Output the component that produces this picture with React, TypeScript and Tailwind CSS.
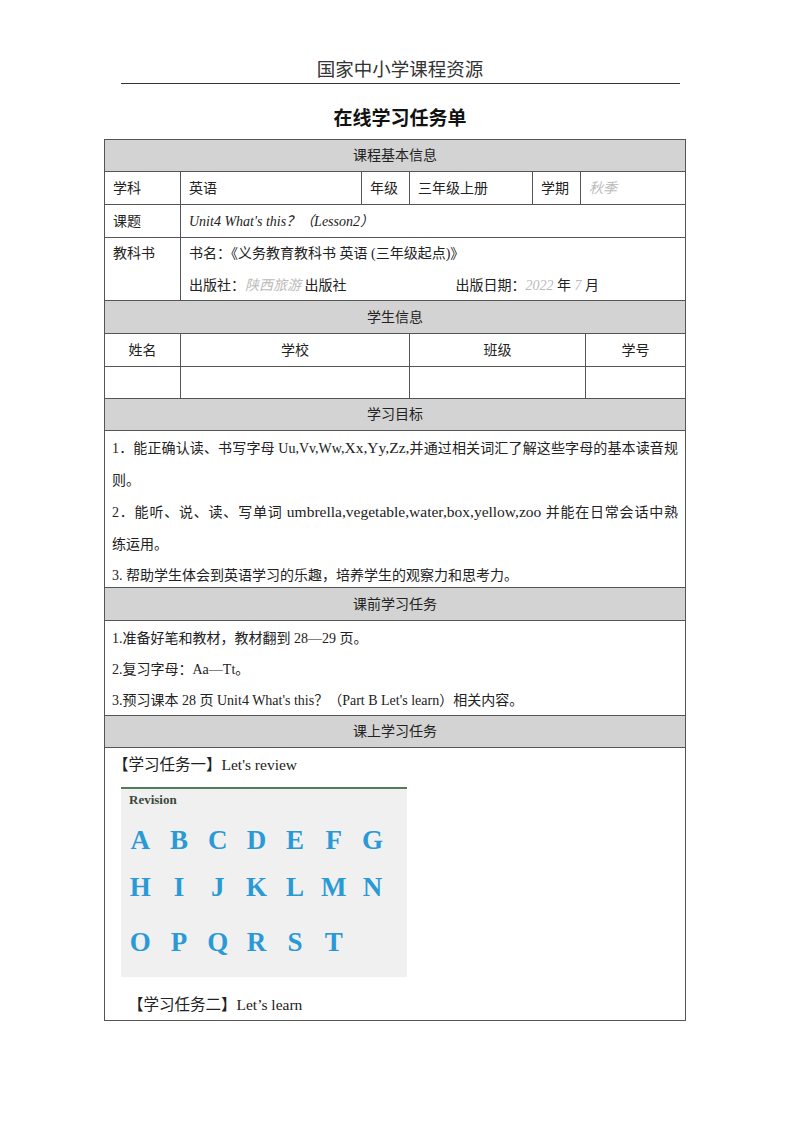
const Sec = ({ title, h = 'h-[32px]' }: { title: string; h?: string }) => (
  <div className={`${h} flex items-center justify-center bg-[#d3d3d3] border-b border-[#555] text-[14px] text-[#222]`}>
    {title}
  </div>
);

const Cell = ({ w, children, last }: { w: string; children?: React.ReactNode; last?: boolean }) => (
  <div className={`${w} flex items-center px-2 ${last ? '' : 'border-r border-[#555]'}`}>{children}</div>
);

const letters = [
  ['A', 'B', 'C', 'D', 'E', 'F', 'G'],
  ['H', 'I', 'J', 'K', 'L', 'M', 'N'],
  ['O', 'P', 'Q', 'R', 'S', 'T'],
];

export default function App() {
  return (
    <div className="w-[800px] h-[1132px] bg-white font-['Liberation_Serif','Noto_Sans_CJK_SC',serif] text-[#222]">
      {/* page header */}
      <div className="pt-[57px] flex justify-center text-[18.5px] leading-[26px] text-[#333]">国家中小学课程资源</div>
      <div className="ml-[121px] w-[559px] border-t border-[#333]"></div>
      <div className="mt-[22px] flex justify-center text-[19px] leading-[26px] font-bold text-[#111]">在线学习任务单</div>

      <div className="mt-[7px] ml-[104px] w-[582px] border-l border-t border-r border-[#555] text-[14px]">
        <Sec title="课程基本信息" />

        <div className="h-[33px] flex border-b border-[#555]">
          <Cell w="w-[76px]">学科</Cell>
          <Cell w="w-[181px]">英语</Cell>
          <Cell w="w-[48px]">年级</Cell>
          <Cell w="w-[123px]">三年级上册</Cell>
          <Cell w="w-[48px]">学期</Cell>
          <Cell w="flex-1" last><span className="italic text-[#bbb]">秋季</span></Cell>
        </div>

        <div className="h-[33px] flex border-b border-[#555]">
          <Cell w="w-[76px]">课题</Cell>
          <Cell w="flex-1" last><span className="italic">Unit4 What's this？（Lesson2）</span></Cell>
        </div>

        <div className="h-[63px] flex border-b border-[#555]">
          <div className="w-[76px] border-r border-[#555] px-2 pt-[5px] leading-[22px]">教科书</div>
          <div className="flex-1 px-2 pt-[4px]">
            <div className="leading-[24px]">书名：《义务教育教科书 英语 (三年级起点)》</div>
            <div className="mt-[8px] leading-[24px] flex">
              <span>出版社：<span className="italic text-[#bbb]">陕西旅游</span> 出版社</span>
              <span className="ml-[109px]">出版日期：<span className="italic text-[#bbb]">2022</span> 年 <span className="italic text-[#bbb]">7</span> 月</span>
            </div>
          </div>
        </div>

        <Sec title="学生信息" h="h-[33px]" />
        <div className="h-[33px] flex border-b border-[#555]">
          <div className="w-[76px] border-r border-[#555] flex items-center justify-center">姓名</div>
          <div className="w-[229px] border-r border-[#555] flex items-center justify-center">学校</div>
          <div className="w-[176px] border-r border-[#555] flex items-center justify-center">班级</div>
          <div className="flex-1 flex items-center justify-center">学号</div>
        </div>
        <div className="h-[32px] flex border-b border-[#555]">
          <div className="w-[76px] border-r border-[#555]"></div>
          <div className="w-[229px] border-r border-[#555]"></div>
          <div className="w-[176px] border-r border-[#555]"></div>
          <div className="flex-1"></div>
        </div>

        <Sec title="学习目标" />
        <div className="h-[157px] border-b border-[#555] px-[7px] pt-[1px] leading-[31.5px]">
          <div className="whitespace-nowrap text-justify [text-align-last:justify]">
            1．能正确认读、书写字母 Uu,Vv,Ww,<span className="text-[15.5px]">Xx,Yy,Zz,</span>并通过相关词汇了解这些字母的基本读音规
          </div>
          <div>则。</div>
          <div className="whitespace-nowrap text-justify [text-align-last:justify]">
            2．能听、说、读、写单词 <span className="text-[15.5px]">umbrella,vegetable,water,box,yellow,zoo</span> 并能在日常会话中熟
          </div>
          <div>练运用。</div>
          <div>3. 帮助学生体会到英语学习的乐趣，培养学生的观察力和思考力。</div>
        </div>

        <Sec title="课前学习任务" h="h-[33px]" />
        <div className="h-[95px] border-b border-[#555] px-[7px] pt-[2px] leading-[31px]">
          <div>1.准备好笔和教材，教材翻到 28—29 页。</div>
          <div>2.复习字母：Aa—Tt。</div>
          <div>3.预习课本 28 页 Unit4 What's this？（Part B Let's learn）相关内容。</div>
        </div>

        <Sec title="课上学习任务" />
        <div className="h-[273px] border-b border-[#555] pt-[6px]">
          <div className="pl-[8px] text-[15.5px] leading-[22px]">【学习任务一】Let's review</div>
          <div className="mt-[11px] ml-[16px] w-[286px] h-[190px] bg-[#f0f0f0] border-t-2 border-[#4f7d5c]">
            <div className="pl-[8px] pt-[2px] text-[13px] leading-[18px] font-bold text-[#3a473c]">Revision</div>
            <div className="mt-[13px] flex flex-col">
              {letters.map((row, i) => (
                <div
                  key={i}
                  className={`grid grid-cols-[repeat(7,38.7px)] text-[27px] font-bold text-[#2a9ad6] leading-[36px] ${i === 1 ? 'mt-[11px]' : i === 2 ? 'mt-[19px]' : ''}`}
                >
                  {row.map((l) => (
                    <span key={l} className="text-center">{l}</span>
                  ))}
                </div>
              ))}
            </div>
          </div>
          <div className="mt-[17px] pl-[23px] text-[15.5px] leading-[22px]">【学习任务二】Let’s learn</div>
        </div>
      </div>
    </div>
  );
}
